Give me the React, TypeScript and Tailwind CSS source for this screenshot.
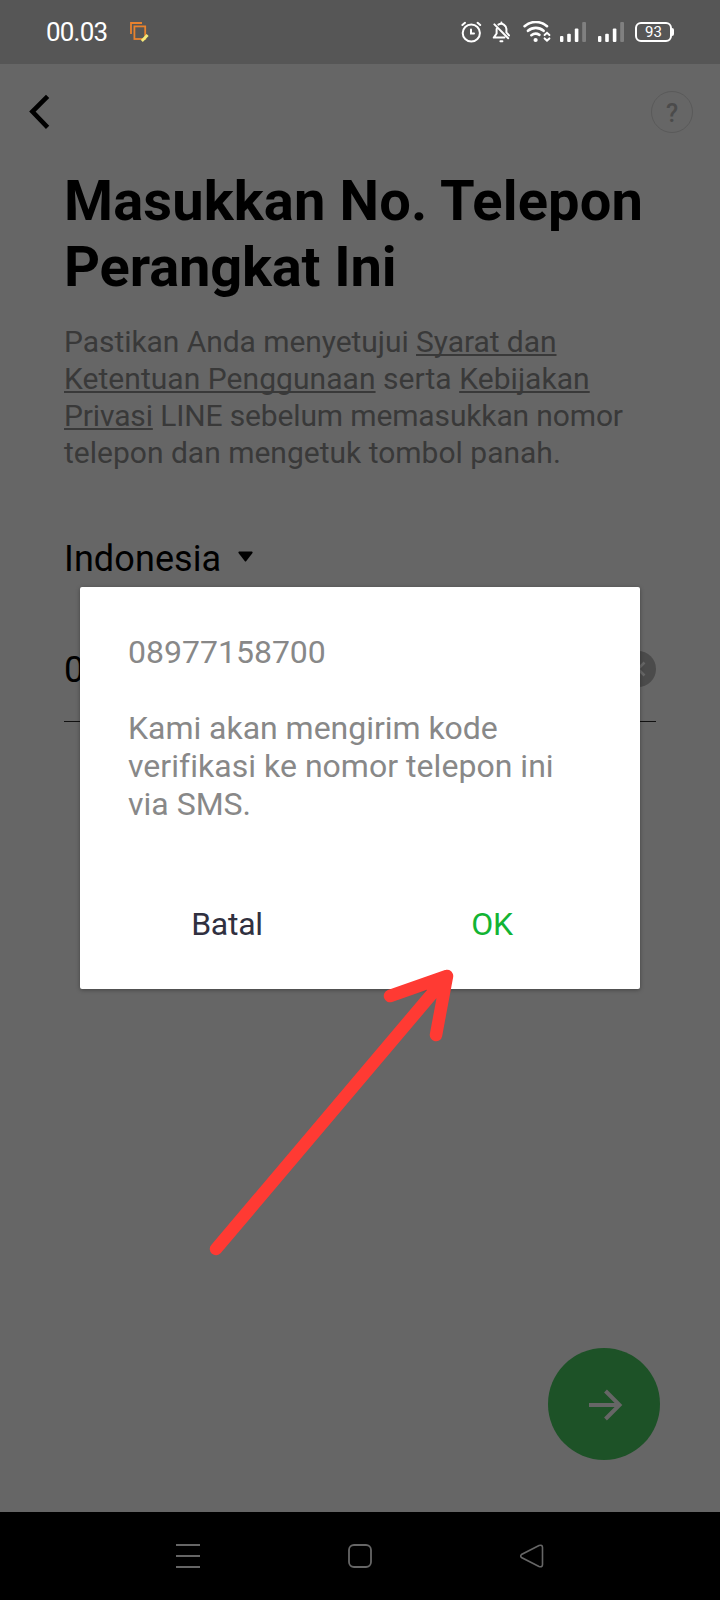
function Signal() {
  return (
    <svg width="26" height="20" viewBox="0 0 26 20" fill="#fff">
      <rect x="0" y="14" width="3.4" height="6" rx="1" />
      <rect x="7.2" y="11.7" width="3.6" height="8.3" rx="1" />
      <rect x="14.8" y="6.6" width="3.6" height="13.4" rx="1" />
      <rect x="22.2" y="0" width="3.8" height="20" rx="1" fill="#808080" />
    </svg>
  );
}

function StatusBar() {
  return (
    <header className="flex h-16 items-center bg-[#565656] pl-[46px] pr-[46px] text-white">
      <span className="w-[64px] text-[26px] leading-8 tracking-[-0.8px] whitespace-nowrap">00.03</span>
      <svg className="ml-[19px]" width="22" height="22" viewBox="0 0 22 22" fill="none">
        <path d="M2 13V2h11" stroke="#e8822e" strokeWidth="1.8" />
        <rect x="5.4" y="5.4" width="10.8" height="12.6" stroke="#e8822e" strokeWidth="1.8" />
        <path d="M12.8 20l5.8-6" stroke="#f5ea7a" strokeWidth="2.8" />
      </svg>
      <div className="ml-auto flex items-center">
        <svg width="21" height="22" viewBox="0 0 21 22" fill="none" stroke="#fff" strokeWidth="2" strokeLinecap="round">
          <circle cx="10.3" cy="12" r="8.6" />
          <path d="M10 8.4v4.2h3M1.4 4l2.6-2.2M19.2 4l-2.6-2.2" />
        </svg>
        <svg className="ml-[10px]" width="19" height="22" viewBox="0 0 19 22" fill="none" stroke="#fff" strokeWidth="2" strokeLinecap="round" strokeLinejoin="round">
          <path d="M2.4 3.4L16.2 17.2M4.6 8v4.5L1.8 16.6h10.6M6.4 3.6a5.4 5.4 0 0 1 8 5.4v2.4l2.6 3M8.4 20.2h2M9.4 1.6v1" />
        </svg>
        <svg className="ml-[12px]" width="28" height="22" viewBox="0 0 28 22" fill="none" stroke="#fff" strokeWidth="2.6" strokeLinecap="round">
          <path d="M1.6 5.2a17 17 0 0 1 22.4 0M5 9.8a12 12 0 0 1 15.6 0M8.4 14.2a7 7 0 0 1 8 -.4" />
          <circle cx="12.6" cy="19" r="2.1" fill="#fff" stroke="none" />
          <path d="M21.6 14l2.4-2.2 2.4 2.2M21.6 17.4l2.4 2.2 2.4-2.2" strokeWidth="2" />
        </svg>
        <div className="ml-[9px] flex gap-[12px]">
          <Signal />
          <Signal />
        </div>
        <div className="ml-[11px] flex h-5 w-[37px] items-center justify-center rounded-[6px] border-2 border-white text-[15px] leading-none">
          93
        </div>
        <div className="h-[8px] w-[2px] rounded-r-sm bg-white" />
      </div>
    </header>
  );
}

function Dialog() {
  return (
    <div className="absolute left-20 top-[587px] flex h-[402px] w-[560px] flex-col rounded-[2px] bg-white pt-[46px] shadow-[0_1px_4px_rgba(0,0,0,0.35)]">
      <div className="px-12 text-[32px] leading-[38px] text-[#888]">
        <p>08977158700</p>
        <p className="mt-[38px]">
          <span className="tracking-[-0.03px]">Kami akan mengirim kode</span>
          <br />
          <span className="tracking-[0.03px]">verifikasi ke nomor telepon ini</span>
          <br />
          via SMS.
        </p>
      </div>
      <div className="mt-[82px] flex px-[14px] text-[32px] leading-[38px]">
        <button className="w-[266px] tracking-[-0.3px] text-[#30303f]">Batal</button>
        <button className="w-[264px] tracking-[-0.3px] text-[#12b433]">OK</button>
      </div>
    </div>
  );
}

export default function App() {
  return (
    <div className="relative flex h-[1600px] w-[720px] flex-col overflow-hidden bg-[#666] font-['Roboto',sans-serif]">
      <StatusBar />
      <nav className="flex h-[104px] justify-between pl-[29px] pr-[27px] pt-[27px]">
        <svg className="mt-[3px]" width="24" height="36" viewBox="0 0 24 36" fill="none" stroke="#000" strokeWidth="4.6">
          <path d="M18.6 2.4L3.4 17.6 18.6 33.4" />
        </svg>
        <div className="flex size-[42px] items-center justify-center rounded-full border-[1.5px] border-[#5a5a5a] pt-[4px] text-[25px] font-medium text-[#4b4b4b]">
          ?
        </div>
      </nav>
      <main className="flex flex-1 flex-col px-16">
        <h1 className="whitespace-nowrap text-[56px] font-bold leading-[66px] text-black">
          <span className="tracking-[0.15px]">Masukkan No. Telepon</span>
          <br />
          <span className="tracking-[-0.15px]">Perangkat Ini</span>
        </h1>
        <p className="mt-[23px] whitespace-nowrap text-[30px] leading-[37px] text-[#393939] [&_u]:decoration-2 [&_u]:underline-offset-2 [&_u]:[text-decoration-skip-ink:none]">
          <span className="tracking-[-0.06px]">
            Pastikan Anda menyetujui <u>Syarat dan</u>
          </span>
          <br />
          <span className="tracking-[0.05px]">
            <u>Ketentuan Penggunaan</u> serta <u>Kebijakan</u>
          </span>
          <br />
          <span className="tracking-[-0.14px]">
            <u>Privasi</u> LINE sebelum memasukkan nomor
          </span>
          <br />
          telepon dan mengetuk tombol panah.
        </p>
        <div className="mt-[67px] flex items-center text-[36px] leading-[42px] tracking-[0.1px] text-black">
          Indonesia
          <svg className="mb-[6px] ml-[17px]" width="15" height="11" viewBox="0 0 15 11">
            <path d="M1 .5h13q1 .5 .5 1.5L8.3 10q-.8 1-1.6 0L.5 2Q0 1 1 .5z" />
          </svg>
        </div>
        <div className="mt-[69px] flex h-[73px] items-start justify-between border-b border-[#111] text-[36px] leading-[42px] text-black">
          <span>0</span>
          <svg className="mt-[2px]" width="36" height="36" viewBox="0 0 36 36">
            <circle cx="18" cy="18" r="18" fill="#4b4b4b" />
            <path d="M11.5 11.5l13 13M24.5 11.5l-13 13" stroke="#666" strokeWidth="2.6" />
          </svg>
        </div>
        <button className="-mr-1 mb-[52px] ml-auto mt-auto flex size-28 items-center justify-center rounded-full bg-[#1d5227]">
          <svg className="ml-[3px] mt-[2px]" width="34" height="32" viewBox="0 0 34 32" fill="none" stroke="#666" strokeWidth="4">
            <path d="M0 16h30M16.5 2l14 14-14 14" />
          </svg>
        </button>
      </main>
      <footer className="flex h-[88px] items-center justify-between bg-black pl-[176px] pr-[176px]">
        <svg width="24" height="24" viewBox="0 0 24 24" stroke="#666" strokeWidth="2">
          <path d="M0 1h24M0 12h24M0 23h24" />
        </svg>
        <svg width="24" height="24" viewBox="0 0 24 24" fill="none" stroke="#666" strokeWidth="1.8">
          <rect x="1" y="1" width="22" height="22" rx="5" />
        </svg>
        <svg width="24" height="24" viewBox="0 0 24 24" fill="none" stroke="#666" strokeWidth="1.6">
          <path d="M1.5 10.5q-1.5 1.5 0 3L19 22.5q3.5 1 3.5-2v-17q0-3-3.5-2z" />
        </svg>
      </footer>
      <Dialog />
      <svg className="absolute left-[200px] top-[960px]" width="260" height="300" viewBox="200 960 260 300" fill="none" stroke="#ff3a33" strokeWidth="12.5" strokeLinecap="round" strokeLinejoin="round">
        <path d="M216 1249L447 976M390 996l57-20-11 59" />
      </svg>
    </div>
  );
}
